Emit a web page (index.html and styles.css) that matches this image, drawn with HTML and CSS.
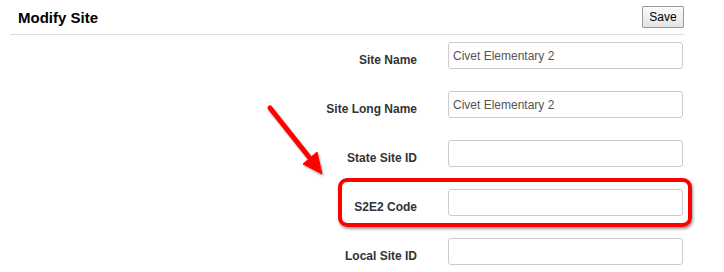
FILE: index.html
```html
<!DOCTYPE html>
<html lang="en">
<head>
  <meta charset="UTF-8">
  <title>Modify Site</title>
  <link rel="stylesheet" href="styles.css">
</head>
<body>
  <div class="page">
    <!-- Header -->
    <div class="header">
      <h1>Modify Site</h1>
      <button class="save-btn">Save</button>
    </div>

    <!-- Site fields -->
    <div class="form">
      <div class="row">
        <label>Site Name</label>
        <input type="text" value="Civet Elementary 2">
      </div>
      <div class="row">
        <label>Site Long Name</label>
        <input type="text" value="Civet Elementary 2">
      </div>
      <div class="row">
        <label>State Site ID</label>
        <input type="text">
      </div>
      <div class="row">
        <label>S2E2 Code</label>
        <input type="text">
      </div>
      <div class="row">
        <label>Local Site ID</label>
        <input type="text">
      </div>
    </div>

    <!-- Annotation -->
    <div class="callout"></div>
    <svg class="arrow" width="724" height="272" viewBox="0 0 724 272">
      <defs>
        <filter id="shadow" x="-20%" y="-20%" width="140%" height="140%">
          <feDropShadow dx="1" dy="1.5" stdDeviation="1.2" flood-color="#000" flood-opacity="0.35"/>
        </filter>
      </defs>
      <g filter="url(#shadow)" fill="#f00" stroke="#f00">
        <line x1="270" y1="108" x2="309" y2="157" stroke-width="5" stroke-linecap="round"/>
        <polygon points="303,164 317,152 322,174" stroke-width="1" stroke-linejoin="round"/>
      </g>
    </svg>
  </div>
</body>
</html>
```

FILE: styles.css
```css
body {
  margin: 0;
  font-family: "Liberation Sans", Arial, sans-serif;
  background: #fff;
}
.page {
  position: relative;
  width: 674px;
  height: 272px;
  margin-left: 10px;
}
.header {
  display: flex;
  justify-content: space-between;
  align-items: center;
  height: 34px;
  padding-left: 8px;
  border-bottom: 1px solid #dcdcdc;
}
.header h1 {
  margin: 0;
  font-size: 15px;
  font-weight: bold;
  color: #000;
}
.save-btn {
  width: 42px;
  height: 22px;
  padding: 0;
  font-family: "Liberation Sans", Arial, sans-serif;
  font-size: 12px;
  color: #000;
  background: linear-gradient(#fbfbfb, #e4e4e4);
  border: 1px solid #9a9a9a;
  border-radius: 1px;
}
/* Form rows */
.form {
  padding-top: 7px;
}
.row {
  display: grid;
  grid-template-columns: 407px 235px;
  column-gap: 31px;
  margin-bottom: 22px;
}
.row label {
  padding-top: 11px;
  font-size: 12px;
  line-height: 15px;
  font-weight: bold;
  color: #333;
  text-align: right;
}
.row input {
  box-sizing: border-box;
  height: 27px;
  padding: 0 4px;
  font-family: "Liberation Sans", Arial, sans-serif;
  font-size: 12px;
  color: #555;
  border: 1px solid #ccc;
  border-radius: 3px;
  outline: none;
}
/* Red annotation */
.callout {
  position: absolute;
  left: 328px;
  top: 178px;
  width: 354px;
  height: 49px;
  box-sizing: border-box;
  border: 4px solid #f00;
  border-radius: 9px;
  box-shadow: 1px 2px 3px rgba(0, 0, 0, 0.4);
}
.arrow {
  position: absolute;
  left: -10px;
  top: 0;
  pointer-events: none;
}
```
